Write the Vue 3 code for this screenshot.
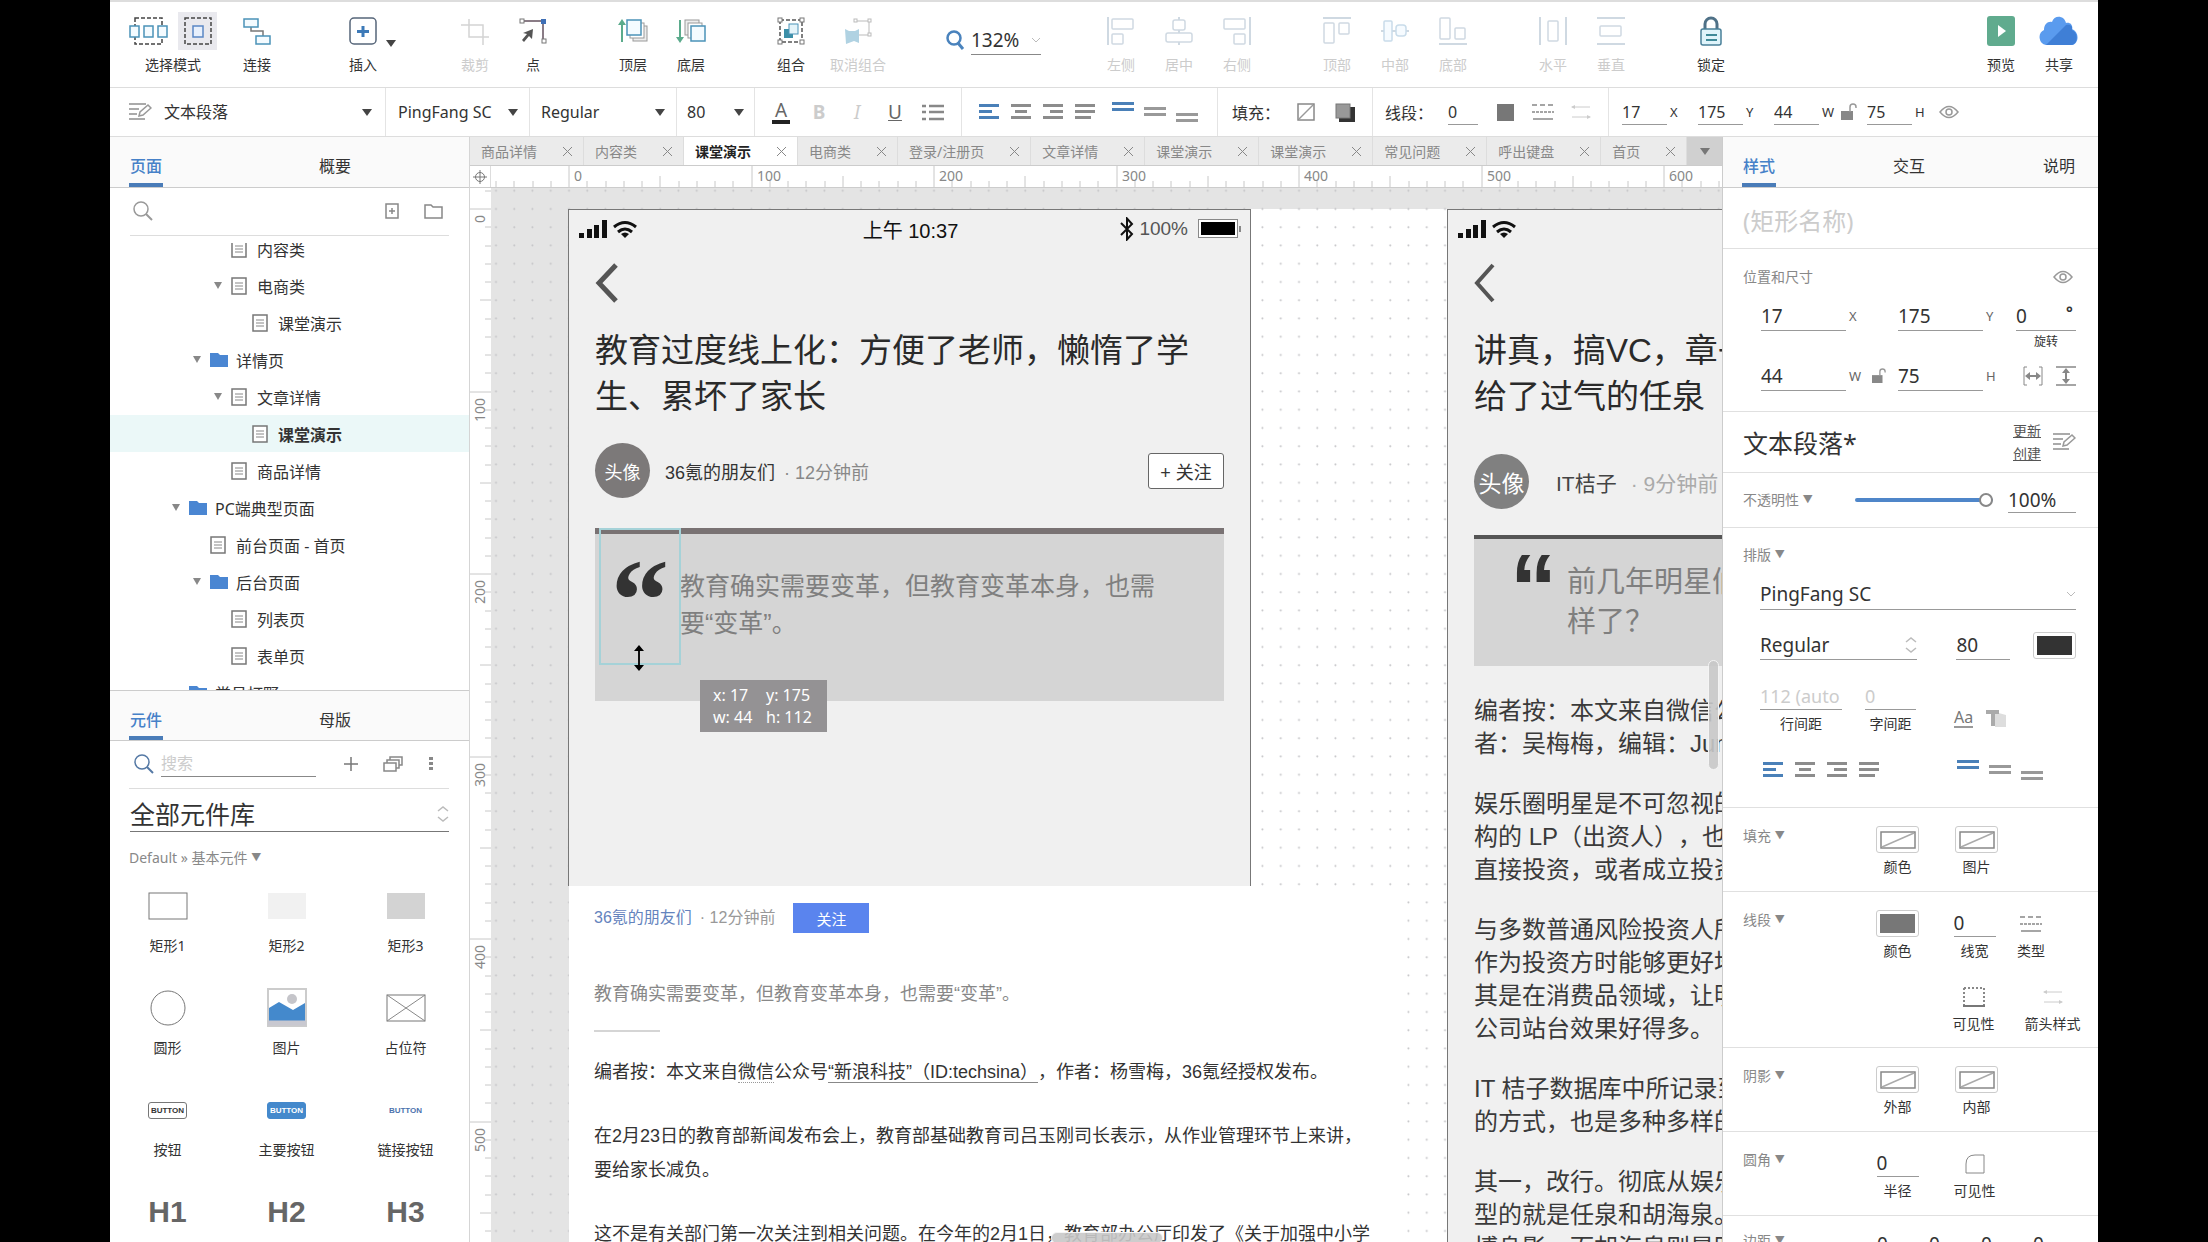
<template>
  <div class="page">
    <div class="app">
      <!-- 顶部工具栏 -->
      <header class="toolbar">
        <div v-for="(group, gi) in toolGroups" :key="gi" class="tool-group" :class="group.cls">
          <template v-if="group.zoom">
            <svg class="ico" width="20" height="22" viewBox="0 0 20 22" v-html="icons.zoom.body"></svg>
            <label class="zoom-field">
              <select aria-label="缩放比例"><option>132%</option></select>
              <svg width="10" height="6" viewBox="0 0 10 6"><path d="M1 1l4 4 4-4" fill="none" stroke="#bbb" /></svg>
            </label>
          </template>
          <template v-else>
            <button v-for="tool in group.tools" :key="tool.label" class="tool" :class="{ off: tool.off, wide: tool.wide }" type="button">
              <span class="tool-icons">
                <span v-for="name in tool.icons" :key="name" class="tool-icon" :class="{ picked: name === 'single' }">
                  <svg :width="icons[name].w" :height="icons[name].h" :viewBox="`0 0 ${icons[name].w} ${icons[name].h}`" v-html="icons[name].body"></svg>
                </span>
              </span>
              <span>{{ tool.label }}</span>
            </button>
            <span v-if="group.caret" class="caret"></span>
          </template>
        </div>
      </header>

      <!-- 样式栏 -->
      <div class="stylebar">
        <div class="seg seg-style">
          <svg class="ico" width="24" height="20" viewBox="0 0 24 20" v-html="icons.edit.body"></svg>
          <select aria-label="样式"><option>文本段落</option></select><span class="caret"></span>
        </div>
        <div class="seg seg-font"><select aria-label="字体"><option>PingFang SC</option></select><span class="caret"></span></div>
        <div class="seg seg-weight"><select aria-label="字重"><option>Regular</option></select><span class="caret"></span></div>
        <div class="seg seg-size"><select aria-label="字号"><option>80</option></select><span class="caret"></span></div>
        <div class="seg seg-format">
          <button class="fmt color" type="button" aria-label="文字颜色"><span>A</span></button>
          <button class="fmt dim" type="button" aria-label="粗体"><b>B</b></button>
          <button class="fmt dim" type="button" aria-label="斜体"><i>I</i></button>
          <button class="fmt" type="button" aria-label="下划线"><u>U</u></button>
          <button class="fmt" type="button" aria-label="列表"><svg width="22" height="17" viewBox="0 0 22 17" v-html="icons.list.body"></svg></button>
        </div>
        <div class="seg seg-align">
          <button v-for="a in aligns" :key="a" class="al" type="button" :aria-label="a"><svg width="20" height="16" viewBox="0 0 20 16" v-html="icons[a].body"></svg></button>
          <span class="space"></span>
          <button v-for="a in valigns" :key="a" class="al" type="button" :aria-label="a"><svg width="24" height="20" viewBox="0 0 24 20" v-html="icons[a].body"></svg></button>
        </div>
        <div class="seg seg-fill">
          <span class="seg-label">填充：</span>
          <button class="fmt" type="button" aria-label="填充颜色"><svg width="18" height="18" viewBox="0 0 18 18" v-html="icons.none.body"></svg></button>
          <button class="fmt" type="button" aria-label="阴影"><svg width="20" height="19" viewBox="0 0 20 19" v-html="icons.shadow.body"></svg></button>
        </div>
        <div class="seg seg-line">
          <span class="seg-label">线段：</span>
          <input class="num tiny" aria-label="线宽" value="0" />
          <button class="fmt" type="button" aria-label="线条颜色"><span class="block"></span></button>
          <button class="fmt" type="button" aria-label="线型"><svg width="22" height="16" viewBox="0 0 22 16" v-html="icons.dash.body"></svg></button>
          <button class="fmt" type="button" aria-label="箭头"><svg width="20" height="14" viewBox="0 0 20 14" v-html="icons.arrows.body"></svg></button>
        </div>
        <div class="seg-pos">
          <template v-for="p in position" :key="p.unit">
            <label class="pos"><input class="num" :value="p.value" /><span :class="{ tight: p.unit === 'W' }">{{ p.unit }}</span></label>
            <svg v-if="p.unit === 'W'" class="lock" width="16" height="18" viewBox="0 0 16 18" v-html="icons.unlock.body"></svg>
          </template>
          <svg width="20" height="14" viewBox="0 0 20 14" v-html="icons.eye.body"></svg>
        </div>
      </div>

      <div class="main">
        <!-- 左侧：页面与元件 -->
        <aside class="left">
          <nav class="tabs2">
            <button class="on" type="button">页面</button>
            <button type="button">概要</button>
          </nav>
          <div class="tree-search">
            <svg width="22" height="22" viewBox="0 0 22 22" v-html="icons.search.body"></svg>
            <span class="grow"></span>
            <button type="button" aria-label="添加页面"><svg width="14" height="16" viewBox="0 0 14 16" v-html="icons.addPage.body"></svg></button>
            <button type="button" aria-label="添加文件夹"><svg width="20" height="16" viewBox="0 0 20 16" v-html="icons.folderLine.body"></svg></button>
          </div>
          <div class="tree">
            <ul>
              <li v-for="(n, i) in tree" :key="i" :class="[{ current: n.current }, 'depth' + n.depth]">
                <span class="twist"><span v-if="n.open" class="caret small"></span></span>
                <svg width="19" height="18" viewBox="0 0 19 18" v-html="n.folder ? icons.folder.body : icons.page.body"></svg>
                <span>{{ n.name }}</span>
              </li>
            </ul>
          </div>

          <nav class="tabs2 lower">
            <button class="on" type="button">元件</button>
            <button type="button">母版</button>
          </nav>
          <div class="lib-search">
            <svg width="22" height="22" viewBox="0 0 22 22" v-html="icons.search.body"></svg>
            <input placeholder="搜索" aria-label="搜索元件" />
            <button type="button" aria-label="添加"><svg width="14" height="14" viewBox="0 0 14 14"><path d="M7 0v14M0 7h14" stroke="#777" stroke-width="1.500" /></svg></button>
            <button type="button" aria-label="元件库"><svg width="20" height="16" viewBox="0 0 20 16" v-html="icons.stack.body"></svg></button>
            <button type="button" aria-label="更多"><svg width="6" height="16" viewBox="0 0 6 16"><path d="M1 1h4v3H1zM1 6h4v3H1zM1 11h4v3H1z" fill="#888" /></svg></button>
          </div>
          <div class="lib-select">
            <select aria-label="元件库"><option>全部元件库</option></select>
            <svg width="12" height="18" viewBox="0 0 12 18" v-html="icons.updown.body"></svg>
          </div>
          <div class="lib-path">Default » 基本元件 <span>▼</span></div>
          <div class="lib-grid">
            <button v-for="w in widgets" :key="w.name" type="button" class="widget">
              <span class="pic">
                <span v-if="w.tag" :class="w.kind">{{ w.tag }}</span>
                <svg v-else width="40" height="40" viewBox="0 0 40 40" v-html="icons[w.kind].body"></svg>
              </span>
              <span v-if="w.label">{{ w.label }}</span>
            </button>
          </div>
        </aside>

        <!-- 中间：画布 -->
        <main class="stage">
          <div class="doc-tabs">
            <button v-for="(t, i) in docs" :key="i" type="button" :class="{ on: i === 2 }">
              <span>{{ t }}</span>
              <svg width="11" height="11" viewBox="0 0 11 11"><path d="M1 1l9 9M10 1l-9 9" stroke="#888" fill="none" /></svg>
            </button>
            <button type="button" class="more" aria-label="更多标签"><span class="caret"></span></button>
          </div>
          <div class="ruler-row">
            <span class="corner"><svg width="14" height="14" viewBox="0 0 14 14"><g fill="none" stroke="#777"><circle cx="7" cy="7" r="4.5" /><path d="M7 0v14M0 7h14" /></g></svg></span>
            <svg class="ruler-x" height="21">
              <template v-for="t in ticksX" :key="t.at">
                <line :x1="t.at" :x2="t.at" :y1="t.top" y2="21" stroke="#c8c8c8" />
                <text v-if="t.text" :x="t.at + 5" y="15">{{ t.text }}</text>
              </template>
            </svg>
          </div>
          <div class="work">
            <svg class="ruler-y" width="21">
              <template v-for="t in ticksY" :key="t.at">
                <line :y1="t.at" :y2="t.at" :x1="t.top" x2="21" stroke="#c8c8c8" />
                <text v-if="t.text" text-anchor="end" :transform="`translate(15 ${t.at + 6}) rotate(-90)`">{{ t.text }}</text>
              </template>
            </svg>
            <div class="canvas">
              <div class="positive"></div>
              <svg class="dots">
                <defs>
                  <pattern id="dot" :width="step" :height="step" :x="originX - 9" :y="originY - 9" patternUnits="userSpaceOnUse">
                    <circle cx="9" cy="9" r="1" fill="#c4c4c7" />
                  </pattern>
                </defs>
                <rect width="100%" height="100%" fill="url(#dot)" />
              </svg>

              <section class="article">
                <div class="by"><a href="#">36氪的朋友们</a><span>· 12分钟前</span><button type="button">关注</button></div>
                <p class="lead">教育确实需要变革，但教育变革本身，也需要“变革”。</p>
                <hr />
                <p>编者按：本文来自<span class="dotted">微信</span>公众号<a href="#">“新浪科技”（ID:techsina）</a>，作者：杨雪梅，36氪经授权发布。</p>
                <p>在2月23日的教育部新闻发布会上，教育部基础教育司吕玉刚司长表示，从作业管理环节上来讲，<br />要给家长减负。</p>
                <p>这不是有关部门第一次关注到相关问题。在今年的2月1日，教育部办公厅印发了《关于加强中小学</p>
              </section>

              <section class="board board-1">
                <div class="status">
                  <svg width="60" height="20" viewBox="0 0 60 20" v-html="icons.signal.body"></svg>
                  <span>上午 10:37</span>
                  <span class="power">
                    <svg width="14" height="24" viewBox="0 0 14 24"><path d="M1 6l11 11-5 5.5V1.500l5 5.500L1 18" fill="none" stroke="#111" stroke-width="2" /></svg>
                    <span>100%</span>
                    <svg width="44" height="20" viewBox="0 0 44 20"><rect x=".5" y=".5" width="39" height="18" fill="#fff" stroke="#888" /><rect x="3" y="3" width="34" height="13" /><path d="M42 7v6" stroke="#888" stroke-width="2" /></svg>
                  </span>
                </div>
                <div class="inner">
                  <svg class="back" width="24" height="40" viewBox="0 0 24 40"><path d="M21 2L4 20l17 18" fill="none" stroke="#555" stroke-width="5" /></svg>
                  <h1>教育过度线上化：方便了老师，懒惰了学<br />生、累坏了家长</h1>
                  <div class="author">
                    <span class="avatar">头像</span>
                    <span class="name">36氪的朋友们</span>
                    <span class="time">· 12分钟前</span>
                    <button type="button">+ 关注</button>
                  </div>
                  <blockquote>
                    <span class="mark">“</span>
                    <span class="say">教育确实需要变革，但教育变革本身，也需<br />要“变革”。</span>
                  </blockquote>
                </div>
              </section>

              <section class="board board-2">
                <div class="status">
                  <svg width="60" height="20" viewBox="0 0 60 20" v-html="icons.signal.body"></svg>
                </div>
                <div class="inner">
                  <svg class="back" width="24" height="40" viewBox="0 0 24 40"><path d="M19 2L3 20l16 18" fill="none" stroke="#555" stroke-width="4" /></svg>
                  <h1>讲真，搞VC，章子怡输<br />给了过气的任泉</h1>
                  <div class="author">
                    <span class="avatar">头像</span>
                    <span class="name">IT桔子</span>
                    <span class="time">· 9分钟前</span>
                  </div>
                  <blockquote>
                    <span class="mark">“</span>
                    <span class="say">前几年明星们都怎么<br />样了？</span>
                  </blockquote>
                  <p v-for="(p, i) in story" :key="i"><template v-for="line in p" :key="line">{{ line }}<br /></template></p>
                </div>
              </section>

              <div class="selection"></div>
              <svg class="cursor" width="14" height="26" viewBox="0 0 14 26"><path d="M7 3v20" stroke="#111" stroke-width="2" /><path d="M7 0l5 6H2zM7 26l5-6H2z" /></svg>
              <div class="tip"><span>x: 17</span><span>y: 175</span><span>w: 44</span><span>h: 112</span></div>
              <div class="thumb thumb-y"></div>
              <div class="thumb thumb-x"></div>
            </div>
          </div>
        </main>

        <!-- 右侧：样式面板 -->
        <aside class="right">
          <nav class="tabs3">
            <button class="on" type="button">样式</button>
            <button type="button">交互</button>
            <button type="button">说明</button>
          </nav>
          <div class="sec name-sec"><input placeholder="(矩形名称)" aria-label="矩形名称" /></div>
          <div class="sec pos-sec">
            <div class="row head"><span class="title">位置和尺寸</span><svg width="20" height="14" viewBox="0 0 20 14" v-html="icons.eye.body"></svg></div>
            <div class="pos-grid">
              <label><input class="num" value="17" /><span>X</span></label>
              <span></span>
              <label><input class="num" value="175" /><span>Y</span></label>
              <label class="rot"><input class="num" value="0" /><b>°</b><small>旋转</small></label>
              <label><input class="num" value="44" /><span>W</span></label>
              <svg width="14" height="18" viewBox="0 0 16 18" v-html="icons.unlock.body"></svg>
              <label><input class="num" value="75" /><span>H</span></label>
              <span class="fit">
                <svg width="20" height="20" viewBox="0 0 20 20" v-html="icons.fitW.body"></svg>
                <svg width="20" height="20" viewBox="0 0 20 20" v-html="icons.fitH.body"></svg>
              </span>
            </div>
          </div>
          <div class="sec style-sec">
            <h2>文本段落*</h2>
            <span class="links"><a href="#">更新</a><a href="#">创建</a></span>
            <svg width="24" height="20" viewBox="0 0 24 20" v-html="icons.edit.body"></svg>
          </div>
          <div class="sec opacity-sec">
            <label class="title" for="opacity">不透明性 <i>▼</i></label>
            <input id="opacity" type="range" min="0" max="100" value="100" />
            <input class="num" value="100%" aria-label="不透明度" />
          </div>
          <div class="sec type-sec">
            <span class="title">排版 <i>▼</i></span>
            <div class="type-body">
              <div class="drop"><select aria-label="字体"><option>PingFang SC</option></select><svg width="10" height="6" viewBox="0 0 10 6"><path d="M1 1l4 4 4-4" fill="none" stroke="#bbb" /></svg></div>
              <div class="row second">
                <div class="drop weight"><select aria-label="字重"><option>Regular</option></select><svg width="12" height="18" viewBox="0 0 12 18" v-html="icons.updown.body"></svg></div>
                <input class="num size" value="80" aria-label="字号" />
                <button type="button" class="swatch" aria-label="文字颜色"><span class="ink"></span></button>
              </div>
              <div class="row third">
                <label class="lh"><input class="num pale" value="112 (auto" /><span>行间距</span></label>
                <label class="ls"><input class="num pale" value="0" /><span>字间距</span></label>
                <button type="button" class="aa">Aa</button>
                <svg width="22" height="20" viewBox="0 0 22 20"><path d="M10 4l11 3v12H10z" fill="#ddd" /><path d="M1 2h13v4H10v12H6V6H1z" fill="#aaa" /></svg>
              </div>
              <div class="row fourth">
                <button v-for="a in aligns" :key="a" class="al" type="button" :aria-label="a"><svg width="20" height="16" viewBox="0 0 20 16" v-html="icons[a].body"></svg></button>
                <span class="grow"></span>
                <button v-for="a in valigns" :key="a" class="al" type="button" :aria-label="a"><svg width="24" height="20" viewBox="0 0 24 20" v-html="icons[a].body"></svg></button>
              </div>
            </div>
          </div>
          <div class="sec prop">
            <span class="title">填充 <i>▼</i></span>
            <div class="cells">
              <button type="button"><span class="swatch"><svg width="36" height="18" viewBox="0 0 36 18" v-html="icons.slash.body"></svg></span>颜色</button>
              <button type="button"><span class="swatch"><svg width="36" height="18" viewBox="0 0 36 18" v-html="icons.slash.body"></svg></span>图片</button>
            </div>
          </div>
          <div class="sec prop">
            <span class="title">线段 <i>▼</i></span>
            <div class="cells">
              <button type="button"><span class="swatch"><span class="mid"></span></span>颜色</button>
              <label class="mid-cell"><input class="num" value="0" />线宽</label>
              <button type="button" class="narrow"><span class="box"><svg width="22" height="16" viewBox="0 0 22 16" v-html="icons.dash.body"></svg></span>类型</button>
            </div>
            <div class="cells next">
              <button type="button"><span class="box"><svg width="22" height="20" viewBox="0 0 22 20"><path d="M1 1h20M1 1v18M21 1v18" stroke="#888" stroke-width="2" stroke-dasharray="2 2" fill="none" /><path d="M0 19h22" stroke="#777" stroke-width="2" /></svg></span>可见性</button>
              <button type="button"><span class="box"><svg width="20" height="14" viewBox="0 0 20 14" v-html="icons.arrows.body"></svg></span>箭头样式</button>
            </div>
          </div>
          <div class="sec prop">
            <span class="title">阴影 <i>▼</i></span>
            <div class="cells">
              <button type="button"><span class="swatch"><svg width="36" height="18" viewBox="0 0 36 18" v-html="icons.slash.body"></svg></span>外部</button>
              <button type="button"><span class="swatch"><svg width="36" height="18" viewBox="0 0 36 18" v-html="icons.slash.body"></svg></span>内部</button>
            </div>
          </div>
          <div class="sec prop">
            <span class="title">圆角 <i>▼</i></span>
            <div class="cells">
              <label><input class="num" value="0" />半径</label>
              <button type="button" class="mid-cell"><span class="box"><svg width="20" height="20" viewBox="0 0 20 20"><path d="M1 19V10Q1 1 10 1h9v18z" fill="none" stroke="#888" /></svg></span>可见性</button>
            </div>
          </div>
          <div class="sec prop last">
            <span class="title">边距 <i>▼</i></span>
            <div class="pads">
              <input v-for="n in 4" :key="n" class="num" value="0" :aria-label="'边距' + n" />
            </div>
          </div>
        </aside>
      </div>
    </div>
  </div>
</template>

<script setup>
// 画布缩放：100 个单位对应的像素
const unit = 182.5
const step = unit / 10
const originX = 78
const originY = 21

// 标尺刻度
const makeTicks = (origin, count) => {
  const list = []
  for (let i = -4; i < count; i++) {
    const major = i % 10 === 0
    list.push({
      at: Math.round(origin + i * step),
      top: major ? 0 : i % 5 === 0 ? 10 : 15,
      text: major ? String(i * 10) : ''
    })
  }
  return list
}
const ticksX = makeTicks(originX, 68)
const ticksY = makeTicks(originY, 60)

const aligns = ['alLeft', 'alCenter', 'alRight', 'alJustify']
const valigns = ['vTop', 'vMiddle', 'vBottom']

const position = [
  { value: 17, unit: 'X' },
  { value: 175, unit: 'Y' },
  { value: 44, unit: 'W' },
  { value: 75, unit: 'H' }
]

const toolGroups = [
  { cls: 'first', tools: [
    { label: '选择模式', icons: ['multi', 'single'], wide: true },
    { label: '连接', icons: ['connect'] }
  ] },
  { cls: 'insert', caret: true, tools: [{ label: '插入', icons: ['insert'] }] },
  { tools: [
    { label: '裁剪', icons: ['crop'], off: true },
    { label: '点', icons: ['point'] }
  ] },
  { tools: [
    { label: '顶层', icons: ['front'] },
    { label: '底层', icons: ['behind'] }
  ] },
  { cls: 'grouping', tools: [
    { label: '组合', icons: ['group'] },
    { label: '取消组合', icons: ['ungroup'], off: true }
  ] },
  { cls: 'zoom', zoom: true },
  { tools: [
    { label: '左侧', icons: ['aLeft'], off: true },
    { label: '居中', icons: ['aCenter'], off: true },
    { label: '右侧', icons: ['aRight'], off: true }
  ] },
  { tools: [
    { label: '顶部', icons: ['aTop'], off: true },
    { label: '中部', icons: ['aMiddle'], off: true },
    { label: '底部', icons: ['aBottom'], off: true }
  ] },
  { tools: [
    { label: '水平', icons: ['dH'], off: true },
    { label: '垂直', icons: ['dV'], off: true }
  ] },
  { tools: [{ label: '锁定', icons: ['padlock'] }] },
  { cls: 'last', tools: [
    { label: '预览', icons: ['preview'] },
    { label: '共享', icons: ['cloud'] }
  ] }
]

const tree = [
  { name: '内容类', depth: 2 },
  { name: '电商类', depth: 2, open: true },
  { name: '课堂演示', depth: 3 },
  { name: '详情页', depth: 1, open: true, folder: true },
  { name: '文章详情', depth: 2, open: true },
  { name: '课堂演示', depth: 3, current: true },
  { name: '商品详情', depth: 2 },
  { name: 'PC端典型页面', depth: 0, open: true, folder: true },
  { name: '前台页面 - 首页', depth: 1 },
  { name: '后台页面', depth: 1, open: true, folder: true },
  { name: '列表页', depth: 2 },
  { name: '表单页', depth: 2 },
  { name: '党员打野', depth: 0, folder: true }
]

const widgets = [
  { name: 'r1', label: '矩形1', kind: 'rect1' },
  { name: 'r2', label: '矩形2', kind: 'rect2' },
  { name: 'r3', label: '矩形3', kind: 'rect3' },
  { name: 'c', label: '圆形', kind: 'circle' },
  { name: 'img', label: '图片', kind: 'image' },
  { name: 'ph', label: '占位符', kind: 'holder' },
  { name: 'b1', label: '按钮', kind: 'btn-line', tag: 'BUTTON' },
  { name: 'b2', label: '主要按钮', kind: 'btn-main', tag: 'BUTTON' },
  { name: 'b3', label: '链接按钮', kind: 'btn-link', tag: 'BUTTON' },
  { name: 'h1', kind: 'heading', tag: 'H1' },
  { name: 'h2', kind: 'heading', tag: 'H2' },
  { name: 'h3', kind: 'heading', tag: 'H3' }
]

const docs = ['商品详情', '内容类', '课堂演示', '电商类', '登录/注册页', '文章详情', '课堂演示', '课堂演示', '常见问题', '呼出键盘', '首页']

const story = [
  ['编者按：本文来自微信公众', '者：吴梅梅，编辑：Juni'],
  ['娱乐圈明星是不可忽视的', '构的 LP（出资人），也', '直接投资，或者成立投资'],
  ['与多数普通风险投资人所', '作为投资方时能够更好地', '其是在消费品领域，让明', '公司站台效果好得多。'],
  ['IT 桔子数据库中所记录到', '的方式，也是多种多样的'],
  ['其一，改行。彻底从娱乐', '型的就是任泉和胡海泉。', '博身影，而胡海泉则是明']
]

// 所有图标的内部图形
const teal = 'fill="#f4fbff" stroke="#4b93b8" stroke-width="1.5"'
const pale = 'fill="none" stroke="#cfd9e2" stroke-width="1.5"'
const bars = (color, rows) => `<g fill="${color}">${rows.map(([x, y, w]) => `<rect x="${x}" y="${y}" width="${w}" height="3"/>`).join('')}</g>`
const icons = {
  multi: { w: 39, h: 28, body: `<rect x="6" y="1" width="27" height="26" fill="none" stroke="#444" stroke-width="1.5" stroke-dasharray="4 2"/><rect x="1" y="9" width="9" height="11" ${teal}/><rect x="15" y="9" width="9" height="11" ${teal}/><rect x="29" y="9" width="9" height="11" ${teal}/>` },
  single: { w: 28, h: 28, body: '<rect x="1" y="1" width="26" height="26" fill="none" stroke="#444" stroke-width="1.500" stroke-dasharray="4 2"/><rect x="9" y="9" width="10" height="11" fill="#e8f0fc" stroke="#5a87c5" stroke-width="1.5"/>' },
  connect: { w: 28, h: 28, body: `<path d="M8 10v4h12v5" fill="none" stroke="#777" stroke-width="1.500"/><rect x="1" y="2" width="14" height="8" ${teal}/><rect x="13" y="19" width="14" height="8" ${teal}/>` },
  insert: { w: 28, h: 28, body: '<rect x="1" y="1" width="26" height="26" rx="4" fill="#fff" stroke="#566579" stroke-width="1.5"/><path d="M14 9v11M8 14.500h12" stroke="#3d7ab8" stroke-width="3"/>' },
  crop: { w: 28, h: 28, body: '<path d="M0 8h22v20M8 2v18h20" fill="none" stroke="#d4d4d4" stroke-width="1.500"/>' },
  point: { w: 28, h: 28, body: '<path d="M4 4h20v20" fill="none" stroke="#8a7c86" stroke-width="2"/><rect x="1" y="2" width="4" height="4" fill="#fff" stroke="#777"/><rect x="22" y="2" width="5" height="5" fill="#3f6fb5"/><rect x="23" y="22" width="4" height="4" fill="#fff" stroke="#777"/><path d="M14 12l-1 10-3-3-5 6-2-2 5-6-4-1z" fill="#555"/>' },
  front: { w: 30, h: 28, body: `<path d="M4 25V6" stroke="#5bab8c" stroke-width="2"/><path d="M4 2L0 8h8z" fill="#5bab8c"/><rect x="15" y="9" width="14" height="15" fill="#eee" stroke="#999"/><rect x="12" y="6" width="14" height="15" fill="#fff" stroke="#999"/><rect x="9" y="3" width="14" height="15" ${teal}/>` },
  behind: { w: 30, h: 28, body: `<path d="M4 3v19" stroke="#5bab8c" stroke-width="2"/><path d="M4 26L0 20h8z" fill="#5bab8c"/><rect x="9" y="3" width="14" height="15" fill="#eee" stroke="#999"/><rect x="12" y="6" width="14" height="15" fill="#fff" stroke="#999"/><rect x="15" y="9" width="14" height="15" ${teal}/>` },
  group: { w: 28, h: 28, body: '<rect x="3" y="3" width="22" height="22" fill="none" stroke="#555" stroke-width="1.500" stroke-dasharray="4 2"/><g fill="#fff" stroke="#777"><rect x="1" y="1" width="4" height="4"/><rect x="23" y="1" width="4" height="4"/><rect x="1" y="23" width="4" height="4"/><rect x="23" y="23" width="4" height="4"/></g><rect x="7" y="12" width="9" height="9" fill="#3c8fa8"/><rect x="12" y="7" width="9" height="10" fill="#e4f4fa" stroke="#4b93b8"/>' },
  ungroup: { w: 28, h: 28, body: '<path d="M11 4h14v14H14" fill="none" stroke="#bbb"/><g fill="#fff" stroke="#bbb"><rect x="10" y="2" width="3" height="3"/><rect x="24" y="2" width="3" height="3"/><rect x="24" y="16" width="3" height="3"/></g><path d="M1 12l4 2h6l4-2v14l-5-2-8 3z" fill="#b0d2e2"/>' },
  aLeft: { w: 28, h: 28, body: `<path d="M1 0v28" stroke="#cfd9e2" stroke-width="2"/><rect x="5" y="2" width="21" height="10" rx="1" ${pale}/><rect x="5" y="17" width="11" height="10" rx="1" ${pale}/>` },
  aCenter: { w: 28, h: 28, body: `<path d="M14 0v28" stroke="#cfd9e2" stroke-width="2"/><g fill="#fff"><rect x="8" y="3" width="12" height="10" rx="2" stroke="#cfd9e2" stroke-width="1.5"/><rect x="1" y="16" width="26" height="9" rx="2" stroke="#cfd9e2" stroke-width="1.5"/></g>` },
  aRight: { w: 28, h: 28, body: `<path d="M27 0v28" stroke="#cfd9e2" stroke-width="2"/><rect x="1" y="2" width="21" height="10" rx="1" ${pale}/><rect x="11" y="17" width="11" height="10" rx="1" ${pale}/>` },
  aTop: { w: 28, h: 28, body: `<path d="M0 1h28" stroke="#cfd9e2" stroke-width="2"/><rect x="1" y="6" width="10" height="20" rx="1" ${pale}/><rect x="16" y="6" width="10" height="11" rx="1" ${pale}/>` },
  aMiddle: { w: 28, h: 28, body: `<path d="M0 14h28" stroke="#cfd9e2" stroke-width="2"/><g fill="#f6fbff" stroke="#c9dcea" stroke-width="1.500"><rect x="3" y="4" width="8" height="20" rx="1"/><rect x="15" y="8" width="10" height="11" rx="3"/></g>` },
  aBottom: { w: 28, h: 28, body: `<path d="M0 27h28" stroke="#cfd9e2" stroke-width="2"/><rect x="1" y="1" width="10" height="21" rx="1" ${pale}/><rect x="16" y="11" width="10" height="11" rx="1" ${pale}/>` },
  dH: { w: 28, h: 28, body: `<path d="M1 0v28M27 0v28" stroke="#cfd9e2" stroke-width="2"/><rect x="9" y="4" width="10" height="20" rx="1" ${pale}/>` },
  dV: { w: 28, h: 28, body: `<path d="M0 1h28M0 27h28" stroke="#cfd9e2" stroke-width="2"/><rect x="3" y="9" width="21" height="10" rx="1" ${pale}/>` },
  padlock: { w: 24, h: 30, body: '<path d="M6 14V8a6 6 0 0 1 12 0v6" fill="none" stroke="#4f7187" stroke-width="3"/><rect x="2" y="13" width="20" height="16" rx="2" fill="#dff4fb" stroke="#4a8099" stroke-width="1.500"/><path d="M7 19h11M7 24h11" stroke="#3f8a99" stroke-width="2"/>' },
  preview: { w: 28, h: 30, body: '<rect width="28" height="30" rx="3" fill="#60ab8e"/><path d="M11 9l8 6-8 6z" fill="#fff"/>' },
  cloud: { w: 42, h: 30, body: '<path d="M8 29a8 8 0 0 1-2-15C6 8 10 5 14 6c2-7 12-7 14 1 5-1 7 3 6 6 8 3 7 16-1 16z" fill="#5a9bee"/><path d="M8 29L28 9c5-1 7 2 6 5 7 3 6 15-1 15z" fill="#3f7fd6"/>' },
  zoom: { body: '<circle cx="9" cy="9" r="6.500" fill="none" stroke="#4a83bd" stroke-width="2.500"/><path d="M13 14l5 6" stroke="#4a83bd" stroke-width="3"/>' },
  edit: { body: '<path d="M1 2h17M1 7h10M1 12h8M1 17h16" stroke="#aaa" stroke-width="2"/><path d="M11 14l1-4 8-7 3 3-8 7z" fill="#fff" stroke="#999" stroke-width="1.500"/>' },
  list: { body: '<path d="M0 2h4M0 8h4M0 15h4M7 2h15M7 8h15M7 15h15" stroke="#888" stroke-width="2.500"/>' },
  alLeft: { body: bars('#4a80b8', [[0, 0, 20], [0, 6, 13], [0, 12, 20]]) },
  alCenter: { body: bars('#8c8c8c', [[0, 0, 20], [4, 6, 12], [0, 12, 20]]) },
  alRight: { body: bars('#8c8c8c', [[0, 0, 20], [7, 6, 13], [0, 12, 20]]) },
  alJustify: { body: bars('#8c8c8c', [[0, 0, 20], [0, 6, 20], [0, 12, 16]]) },
  vTop: { body: bars('#4a80b8', [[1, 0, 22], [1, 6, 22]]) },
  vMiddle: { body: bars('#999', [[1, 5, 22], [1, 11, 22]]) },
  vBottom: { body: bars('#999', [[1, 11, 22], [1, 17, 22]]) },
  none: { body: '<rect x="1" y="1" width="16" height="16" fill="#fff" stroke="#888" stroke-width="1.500"/><path d="M2 16L16 2" stroke="#999" stroke-width="1.5"/>' },
  shadow: { body: '<rect x="4" y="4" width="16" height="15" fill="#333"/><rect x="1" y="1" width="14" height="14" fill="#999" stroke="#777"/>' },
  dash: { body: '<g stroke="#888" stroke-width="1.500"><path d="M0 1h22" stroke-dasharray="5 3"/><path d="M0 8h22" stroke-dasharray="3 1"/><path d="M1 15h20"/></g>' },
  arrows: { body: '<path d="M1 2h18M1 12h18" stroke="#ccc"/><path d="M0 2l4-2v4zM20 12l-4-2v4z" fill="#ccc"/>' },
  unlock: { body: '<rect x="0" y="8" width="12" height="9" fill="#888"/><path d="M9 9V4a3 3 0 0 1 6 0v1" fill="none" stroke="#999" stroke-width="1.500"/>' },
  eye: { body: '<path d="M1 7q9-11 18 0q-9 11-18 0z" fill="none" stroke="#999" stroke-width="1.500"/><circle cx="10" cy="7" r="3" fill="none" stroke="#999" stroke-width="1.500"/>' },
  search: { body: '<circle cx="9" cy="9" r="7" fill="none" stroke="currentColor" stroke-width="1.500"/><path d="M14 14l6 6" stroke="currentColor" stroke-width="2"/>' },
  addPage: { body: '<path d="M1 1h12v14H1zM7 5v6M4 8h6" fill="none" stroke="#888" stroke-width="1.500"/>' },
  folderLine: { body: '<path d="M1 2h6l2 2h9v11H1z" fill="none" stroke="#888" stroke-width="1.500"/>' },
  folder: { body: '<path d="M0 2h8l2 2h8v12H0z" fill="#4a86d2"/>' },
  page: { body: '<rect x="1" y="1" width="14" height="16" fill="#fff" stroke="#777" stroke-width="1.500"/><path d="M4 6h8M4 9h8M4 12h8" stroke="#888"/>' },
  stack: { body: '<path d="M1 7h12v8H1zM4 7V4h12v8h-3M7 4V1h12v8h-3" fill="none" stroke="#888" stroke-width="1.500"/>' },
  updown: { body: '<path d="M1 6l5-4 5 4M1 12l5 4 5-4" fill="none" stroke="#bbb" stroke-width="1.500"/>' },
  fitW: { body: '<path d="M4 1H1v18h3M16 1h3v18h-3" fill="none" stroke="#888"/><path d="M5 10h10" stroke="#888" stroke-width="2"/><path d="M2 10l5-4v8zM18 10l-5-4v8z" fill="#888"/>' },
  fitH: { body: '<path d="M0 1h20M0 19h20" stroke="#888" stroke-width="1.500"/><path d="M10 5v10" stroke="#888" stroke-width="2"/><path d="M10 2l4 5H6zM10 18l4-5H6z" fill="#888"/>' },
  slash: { body: '<rect x="1" y="1" width="34" height="16" fill="#fff" stroke="#888" stroke-width="1.500"/><path d="M2 16L34 2" stroke="#aaa" stroke-width="1.500"/>' },
  rect1: { body: '<rect x="1" y="7" width="38" height="26" fill="#fff" stroke="#777"/>' },
  rect2: { body: '<rect x="1" y="7" width="38" height="26" fill="#f1f1f1"/>' },
  rect3: { body: '<rect x="1" y="7" width="38" height="26" fill="#d3d3d3"/>' },
  circle: { body: '<circle cx="20" cy="20" r="17" fill="#fff" stroke="#777"/>' },
  image: { body: '<rect x="1" y="1" width="38" height="37" fill="#fff" stroke="#ccc" stroke-width="2"/><circle cx="25" cy="11" r="5" fill="#c5c5ca"/><path d="M2 33V20l10-6 14 8 12-7v18z" fill="#4489cc"/><path d="M1 35h38" stroke="#c8c8d0" stroke-width="5"/>' },
  holder: { body: '<rect x="1" y="7" width="38" height="26" fill="#fff" stroke="#777"/><path d="M1 7l38 26M39 7L1 33" stroke="#888"/>' },
  signal: { body: '<g fill="#111"><rect x="0" y="14" width="5" height="5"/><rect x="8" y="10" width="5" height="9"/><rect x="15" y="6" width="5" height="13"/><rect x="23" y="1" width="5" height="18"/></g><g fill="none" stroke="#111" stroke-width="3"><path d="M35 8q11-9 22 0"/><path d="M39 13q7-6 14 0"/></g><path d="M42 15q4-3 8 0l-4 4z" fill="#111"/>' }
}
</script>

<style>
body {
  background: #000;
}
</style>

<style scoped>
.page {
  height: 100vh;
  padding: 0 110px;
  box-sizing: border-box;
  background: #000;
  overflow: hidden;
}
.page * {
  box-sizing: border-box;
}
.app {
  height: 100%;
  display: flex;
  flex-direction: column;
  background: #fff;
  color: #333;
  border-top: 2px solid #ddd;
  font-family: "Noto Sans", "Noto Sans CJK SC", sans-serif;
  font-size: 14px;
  overflow: hidden;
}
button,
input,
select {
  font: inherit;
  color: inherit;
  background: none;
  border: 0;
  padding: 0;
  margin: 0;
  min-width: 0;
  border-radius: 0;
  outline: 0;
  appearance: none;
}
svg {
  display: block;
  flex: none;
}
.grow {
  flex: 1;
}
.caret {
  flex: none;
  border: 5px solid transparent;
  border-top: 7px solid #444;
  border-bottom: 0;
}
.caret.small {
  border-width: 4px;
  border-top: 7px solid #888;
  border-bottom: 0;
}
.num {
  width: 45px;
  height: 26px;
  border-bottom: 1px solid #999;
}

/* 工具栏 */
.toolbar {
  flex: none;
  height: 86px;
  display: flex;
  align-items: center;
  gap: 42px;
  padding: 0 10px 2px 14px;
  border-bottom: 1px solid #ddd;
}
.tool-group {
  display: flex;
  align-items: center;
}
.tool-group.first {
  gap: 6px;
}
.tool-group.insert {
  padding: 0 8px 0 6px;
}
.tool-group.insert .caret {
  margin-left: -6px;
}
.tool-group.last {
  margin-left: auto;
}
.tool {
  width: 58px;
  flex: none;
  display: flex;
  flex-direction: column;
  align-items: center;
  gap: 5px;
  line-height: 20px;
  white-space: nowrap;
}
.tool.wide {
  width: 98px;
}
.grouping .tool + .tool {
  width: 76px;
}
.tool.off {
  color: #ccc;
}
.tool-icons {
  display: flex;
  gap: 10px;
}
.tool-icon {
  display: grid;
  place-items: center;
  height: 38px;
}
.tool-icon.picked {
  width: 39px;
  background: #e9e9ee;
}
.tool-group.zoom {
  gap: 6px;
  padding: 0 9px 7px 7px;
}
.zoom-field {
  display: flex;
  align-items: center;
  width: 70px;
  height: 30px;
  border-bottom: 1px solid #888;
  font-size: 19px;
}
.zoom-field select {
  flex: 1;
}

/* 样式栏 */
.stylebar {
  flex: none;
  height: 49px;
  display: flex;
  align-items: center;
  border-bottom: 1px solid #ddd;
  font-size: 16px;
}
.seg {
  flex: none;
  height: 100%;
  display: flex;
  align-items: center;
  border-right: 1px solid #e4e4e4;
}
.seg select {
  flex: 1;
}
.seg-style {
  width: 276px;
  padding: 0 13px 0 18px;
  gap: 12px;
}
.seg-font {
  width: 144px;
  padding: 0 11px 0 12px;
}
.seg-weight {
  width: 147px;
  padding: 0 11px;
}
.seg-size {
  width: 78px;
  padding: 0 10px;
}
.seg-format {
  width: 207px;
  padding-left: 7px;
}
.fmt {
  width: 38px;
  height: 30px;
  display: grid;
  place-items: center;
  font-size: 19px;
  line-height: 22px;
  color: #666;
}
.fmt.dim {
  color: #ccc;
}
.fmt.color span {
  border-bottom: 4px solid #222;
  padding: 0 3px;
  line-height: 19px;
}
.seg-align {
  width: 256px;
  padding-left: 11px;
}
.al {
  width: 32px;
  height: 24px;
  display: grid;
  place-items: center;
}
.space {
  width: 6px;
}
.seg-fill {
  width: 155px;
  padding-left: 14px;
}
.seg-fill .fmt + .fmt {
  width: 40px;
}
.seg-line {
  width: 236px;
  padding-left: 12px;
}
.seg-label {
  width: 55px;
  white-space: nowrap;
}
.num.tiny {
  width: 30px;
  margin: 0 8px;
}
.block {
  width: 17px;
  height: 17px;
  background: #777;
}
.seg-pos {
  display: flex;
  align-items: center;
  padding-left: 13px;
}
.pos {
  display: flex;
  align-items: center;
}
.pos span {
  width: 31px;
  padding-left: 3px;
  font-size: 13px;
}
.pos .tight {
  width: 22px;
}
.lock {
  margin-right: 10px;
}
.seg-pos > :last-child {
  margin-left: -4px;
}

.main {
  flex: 1;
  min-height: 0;
  display: flex;
}

/* 左侧面板 */
.left {
  flex: none;
  width: 360px;
  display: flex;
  flex-direction: column;
  border-right: 1px solid #d5d5d5;
  overflow: hidden;
}
.tabs2,
.tabs3 {
  flex: none;
  height: 51px;
  display: flex;
  background: #fafafa;
  border-bottom: 1px solid #ccc;
  font-size: 16px;
}
.tabs2 {
  padding-left: 19px;
  gap: 155px;
}
.tabs2 button,
.tabs3 button {
  width: 34px;
  padding-top: 10px;
  white-space: nowrap;
  border-bottom: 4px solid transparent;
}
.tabs2 .on,
.tabs3 .on {
  color: #4681c8;
  font-weight: 500;
  border-bottom-color: #4a7cb8;
}
.tabs2.lower {
  border-top: 1px solid #ccc;
}
.tree-search {
  flex: none;
  height: 48px;
  margin: 0 20px;
  display: flex;
  align-items: center;
  gap: 20px;
  padding: 0 5px 2px 2px;
  border-bottom: 1px solid #ddd;
  color: #999;
}
.tree-search button + button {
  margin-left: 5px;
}
.tree {
  flex: none;
  height: 447px;
  margin-top: 7px;
  overflow: hidden;
}
.tree ul {
  list-style: none;
  margin: -13px 0 0;
  padding: 0;
  font-size: 16px;
}
.tree li {
  height: 37px;
  display: flex;
  align-items: center;
  gap: 7px;
  white-space: nowrap;
}
.depth0 {
  padding-left: 62px;
}
.depth1 {
  padding-left: 83px;
}
.depth2 {
  padding-left: 104px;
}
.depth3 {
  padding-left: 125px;
}
.twist {
  width: 10px;
}
.twist .caret {
  display: block;
  width: 0;
}
.tree .current {
  background: #ebf8f8;
  font-weight: bold;
}
.lib-search {
  flex: none;
  height: 48px;
  margin: 0 20px 0 19px;
  display: flex;
  align-items: center;
  padding: 0 12px 2px 4px;
  border-bottom: 1px solid #ddd;
  color: #5579a5;
}
.lib-search input {
  width: 155px;
  height: 27px;
  margin-left: 6px;
  margin-right: 28px;
  font-size: 16px;
  border-bottom: 1px solid #888;
}
.lib-search input::placeholder,
.name-sec input::placeholder {
  color: #ccc;
  opacity: 1;
}
.lib-search button + button {
  margin-left: 25px;
}
.lib-search button {
  flex: none;
}
.lib-select {
  flex: none;
  height: 43px;
  margin: 0 20px;
  display: flex;
  align-items: center;
  border-bottom: 1px solid #777;
  font-size: 25px;
  padding-top: 8px;
}
.lib-select select {
  flex: 1;
  height: 34px;
}
.lib-path {
  margin: 16px 19px 0;
  line-height: 20px;
  color: #888;
}
.lib-path span {
  font-size: 10px;
  line-height: 10px;
  vertical-align: 2px;
}
.lib-grid {
  display: grid;
  grid-template-columns: repeat(3, 1fr);
  margin: 18px 4px 0 -2px;
}
.widget {
  height: 102px;
  display: flex;
  flex-direction: column;
  align-items: center;
  gap: 10px;
  line-height: 20px;
}
.pic {
  height: 40px;
  display: grid;
  place-items: center;
}
.btn-line,
.btn-main,
.btn-link {
  width: 39px;
  height: 17px;
  font: bold 8px/15px "Liberation Sans", sans-serif;
  border: 1px solid #777;
  border-radius: 3px;
}
.btn-main {
  background: #4489cc;
  border-color: #4489cc;
  color: #fff;
}
.btn-link {
  border-color: transparent;
  color: #4c72ad;
}
.heading {
  font: bold 30px/40px "Liberation Sans", sans-serif;
  color: #666;
}

/* 画布区域 */
.stage {
  flex: 1;
  min-width: 0;
  display: flex;
  flex-direction: column;
  overflow: hidden;
}
.doc-tabs {
  flex: none;
  height: 29px;
  display: flex;
  background: #ebebeb;
  border-bottom: 1px solid #ccc;
  color: #888;
}
.doc-tabs button {
  flex: none;
  display: flex;
  align-items: center;
  gap: 25px;
  padding: 0 10px 0 11px;
  border-right: 1px solid #ddd;
}
.doc-tabs .on {
  background: #fff;
  color: #222;
  font-weight: bold;
}
.doc-tabs .more {
  flex: 1;
  justify-content: center;
  background: #d0d0d0;
  border: 0;
  padding: 0;
}
.doc-tabs .more .caret {
  border-top-color: #777;
}
.ruler-row {
  flex: none;
  height: 22px;
  display: flex;
  border-bottom: 1px solid #ccc;
}
.corner {
  width: 21px;
  display: grid;
  place-items: center;
  border-right: 1px solid #ddd;
}
.ruler-x {
  flex: 1;
  min-width: 0;
}
.ruler-x text,
.ruler-y text {
  font-size: 14px;
  fill: #888;
}
.work {
  flex: 1;
  min-height: 0;
  display: flex;
}
.ruler-y {
  height: 100%;
}
.canvas {
  position: relative;
  flex: 1;
  background: #e4e4e4;
  overflow: hidden;
  font-family: "Liberation Sans", "Noto Sans CJK SC", sans-serif;
  text-spacing-trim: space-all;
}
.positive {
  position: absolute;
  left: 78px;
  top: 21px;
  right: 0;
  bottom: 0;
  background: #fff;
}
.dots {
  position: absolute;
  width: 100%;
  height: 100%;
}
.board {
  position: absolute;
  top: 21px;
  width: 683px;
  background: #f0f0f0;
  border: 1px solid #777;
  border-bottom: 0;
  white-space: nowrap;
}
.board-1 {
  left: 77px;
  height: 677px;
}
.board-2 {
  left: 956px;
  bottom: 0;
  overflow: hidden;
}
.status {
  height: 38px;
  display: grid;
  grid-template-columns: 1fr auto 1fr;
  align-items: center;
  padding: 0 8px 0 10px;
  font-size: 20px;
  color: #111;
}
.power {
  display: flex;
  align-items: center;
  justify-content: flex-end;
  gap: 10px;
  font-size: 19px;
  color: #555;
}
.power svg:first-child {
  margin-right: -5px;
}
.inner {
  padding: 15px 26px 0;
}
.board h1 {
  margin: 25px 0 0;
  font-size: 33px;
  line-height: 46px;
  font-weight: normal;
  color: #2a2a2a;
}
.author {
  display: flex;
  align-items: center;
  margin-top: 23px;
  font-size: 18px;
}
.avatar {
  flex: none;
  width: 55px;
  height: 55px;
  border-radius: 50%;
  background: #7c7979;
  color: #fff;
  display: grid;
  place-items: center;
  margin-right: 15px;
}
.time {
  margin-left: 9px;
  color: #888;
}
.author button {
  margin-left: auto;
  width: 76px;
  height: 36px;
  background: #fff;
  border: 1px solid #666;
  border-radius: 3px;
}
blockquote {
  margin: 30px 0 0;
  height: 173px;
  display: flex;
  background: #d5d5d5;
  border-top: 6px solid #797273;
}
.mark {
  width: 85px;
  padding-left: 16px;
  margin-top: 10px;
  font: bold 116px/113px "Liberation Serif", serif;
  color: #333;
}
.say {
  padding-top: 34px;
  font-size: 25px;
  line-height: 37px;
  color: #7f7f7f;
}
.board-2 .author {
  margin-top: 34px;
  font-size: 21px;
  color: #444;
}
.board-2 .avatar {
  font-size: 23px;
  background: #808080;
  margin-right: 27px;
}
.board-2 .time {
  margin-left: 14px;
  color: #aaa;
}
.board-2 blockquote {
  margin-top: 26px;
  height: 131px;
  border-top: 4px solid #555;
}
.board-2 .mark {
  width: 93px;
  padding-left: 36px;
  margin-top: 4px;
  font: bold 94px/90px "Liberation Sans", sans-serif;
}
.board-2 .say {
  padding-top: 23px;
  font-size: 29px;
  line-height: 40px;
}
.board-2 p {
  margin: 27px 0 0;
  font-size: 24px;
  line-height: 33px;
  color: #3a3a3a;
}
.board-2 blockquote + p {
  margin-top: 28px;
}
.article {
  position: absolute;
  left: 78px;
  top: 698px;
  width: 836px;
  padding: 17px 25px 0;
  background: #fff;
  white-space: nowrap;
  font-size: 18px;
  line-height: 34px;
  color: #333;
}
.by {
  display: flex;
  align-items: center;
  gap: 8px;
  height: 30px;
  font-size: 16px;
  color: #999;
}
.by a {
  color: #6483bd;
  text-decoration: none;
}
.by button {
  width: 76px;
  height: 30px;
  margin-left: 10px;
  background: #5a84ee;
  color: #fff;
  font-size: 15px;
}
.article p {
  margin: 30px 0 0;
}
.article .lead {
  margin-top: 44px;
  color: #888;
}
.article hr {
  width: 66px;
  height: 2px;
  margin: 19px 0 0;
  border: 0;
  background: #d5d5d5;
}
.article hr + p {
  margin-top: 23px;
}
.article p a {
  color: inherit;
  text-decoration: none;
  border-bottom: 1px solid #888;
}
.dotted {
  border-bottom: 1px dotted #999;
}
.selection {
  position: absolute;
  left: 108px;
  top: 340px;
  width: 82px;
  height: 137px;
  border: 2px solid #a5d2d8;
}
.cursor {
  position: absolute;
  left: 141px;
  top: 457px;
}
.tip {
  position: absolute;
  left: 209px;
  top: 492px;
  display: grid;
  grid-template-columns: 53px auto;
  padding: 4px 15px 4px 13px;
  background: #949294;
  color: #fff;
  font: 16px/22px "Noto Sans", sans-serif;
}
.thumb {
  position: absolute;
  background: #c8c8c8e6;
  border: 1px solid #f4f4f4;
  border-radius: 6px;
}
.thumb-y {
  right: 3px;
  top: 472px;
  width: 11px;
  height: 110px;
}
.thumb-x {
  left: 560px;
  bottom: -2px;
  width: 112px;
  height: 12px;
}

/* 右侧面板 */
.right {
  flex: none;
  width: 376px;
  border-left: 1px solid #ccc;
  overflow: hidden;
  background: #fff;
}
.tabs3 {
  justify-content: space-between;
  padding: 0 22px 0 19px;
}
.sec {
  border-bottom: 1px solid #e0e0e0;
  padding: 0 22px 0 20px;
}
.num,
.drop {
  font-size: 19px;
}
.stylebar .num {
  font-size: 16px;
}
.row {
  display: flex;
  align-items: center;
}
.title {
  line-height: 20px;
  color: #888;
}
.title i {
  font-style: normal;
  font-size: 10px;
  line-height: 10px;
  vertical-align: 2px;
}
.name-sec {
  height: 61px;
}
.name-sec input {
  width: 100%;
  height: 60px;
  font-size: 24px;
  padding-top: 4px;
}
.pos-sec {
  height: 163px;
  padding-top: 18px;
}
.head {
  justify-content: space-between;
  padding-right: 3px;
}
.pos-grid {
  display: grid;
  grid-template-columns: 111px 26px 118px 60px;
  row-gap: 30px;
  align-items: center;
  padding: 14px 0 0 18px;
}
.pos-grid label {
  display: flex;
  align-items: center;
  height: 30px;
}
.pos-grid .num {
  width: 85px;
  height: 30px;
}
.pos-grid label span {
  padding-left: 3px;
  font-size: 13px;
  color: #666;
}
.pos-grid .rot {
  display: grid;
  grid-template-columns: 50px 10px;
}
.rot .num {
  width: 50px;
}
.rot b {
  height: 30px;
  border-bottom: 1px solid #999;
  font-size: 16px;
}
.rot small {
  grid-column: 1 / 3;
  text-align: center;
  font-size: 12px;
  line-height: 22px;
  height: 0;
}
.fit {
  display: flex;
  justify-content: space-between;
  padding-left: 7px;
}
.style-sec {
  height: 61px;
  display: flex;
  align-items: center;
  padding-right: 22px;
}
.style-sec h2 {
  flex: 1;
  margin: 0;
  font-size: 25px;
  font-weight: normal;
}
.links {
  display: flex;
  flex-direction: column;
  line-height: 23px;
  margin-right: 11px;
}
.links a {
  color: #555;
}
.opacity-sec {
  height: 55px;
  display: flex;
  align-items: center;
}
.opacity-sec .title {
  width: 112px;
}
.opacity-sec .num {
  width: 68px;
  margin-left: 15px;
}
input[type="range"] {
  width: 138px;
  height: 14px;
}
input[type="range"]::-webkit-slider-runnable-track {
  height: 4px;
  border-radius: 2px;
  background: #4f86c9;
}
input[type="range"]::-webkit-slider-thumb {
  appearance: none;
  width: 14px;
  height: 14px;
  margin-top: -5px;
  border: 2px solid #888;
  border-radius: 50%;
  background: #fff;
}
.type-sec {
  height: 280px;
  padding-top: 17px;
}
.type-body {
  padding: 13px 0 0 17px;
}
.drop {
  display: flex;
  align-items: center;
  height: 32px;
  border-bottom: 1px solid #999;
}
.drop select {
  flex: 1;
}
.second {
  margin-top: 20px;
}
.drop.weight {
  width: 158px;
  height: 30px;
}
.second .size {
  width: 54px;
  height: 30px;
  margin: 0 23px 0 39px;
}
.swatch {
  width: 43px;
  height: 27px;
  display: grid;
  place-items: center;
  border: 1px solid #ccc;
  border-radius: 3px;
}
.ink,
.mid {
  width: 35px;
  height: 19px;
  background: #333;
}
.mid {
  background: #777;
}
.third {
  margin-top: 22px;
  align-items: flex-start;
}
.third label {
  display: flex;
  flex-direction: column;
  align-items: center;
  line-height: 22px;
  gap: 3px;
}
.third .lh {
  width: 82px;
  margin-right: 23px;
}
.third .ls {
  width: 51px;
  margin-right: 38px;
}
.third .num {
  width: 100%;
  height: 28px;
  font-size: 18px;
}
.third svg {
  margin: 26px 0 0 12px;
}
.pale {
  color: #ccc;
}
.aa {
  margin-top: 26px;
  line-height: 18px;
  font-size: 16px;
  color: #777;
  border-bottom: 2px solid #999;
}
.fourth {
  margin: 23px 28px 0 -3px;
}
.prop {
  min-height: 84px;
  padding-top: 18px;
  padding-bottom: 13px;
  display: grid;
  grid-template-columns: 115px 1fr;
  padding-right: 0;
}
.cells {
  grid-column: 2;
  display: flex;
}
.cells > * {
  width: 79px;
  flex: none;
  display: flex;
  flex-direction: column;
  align-items: center;
  gap: 4px;
  line-height: 20px;
}
.cells .mid-cell {
  width: 75px;
  margin-right: 4px;
}
.cells .narrow {
  width: 30px;
}
.cells .num {
  width: 42px;
  height: 27px;
}
.cells.next {
  margin-top: 22px;
  padding-left: 76px;
}
.box {
  height: 27px;
  display: grid;
  place-items: center;
}
.last.prop {
  padding-top: 15px;
}
.pads {
  display: flex;
  gap: 10px;
  padding: 0 0 0 19px;
}
.pads .num {
  width: 42px;
}
</style>
